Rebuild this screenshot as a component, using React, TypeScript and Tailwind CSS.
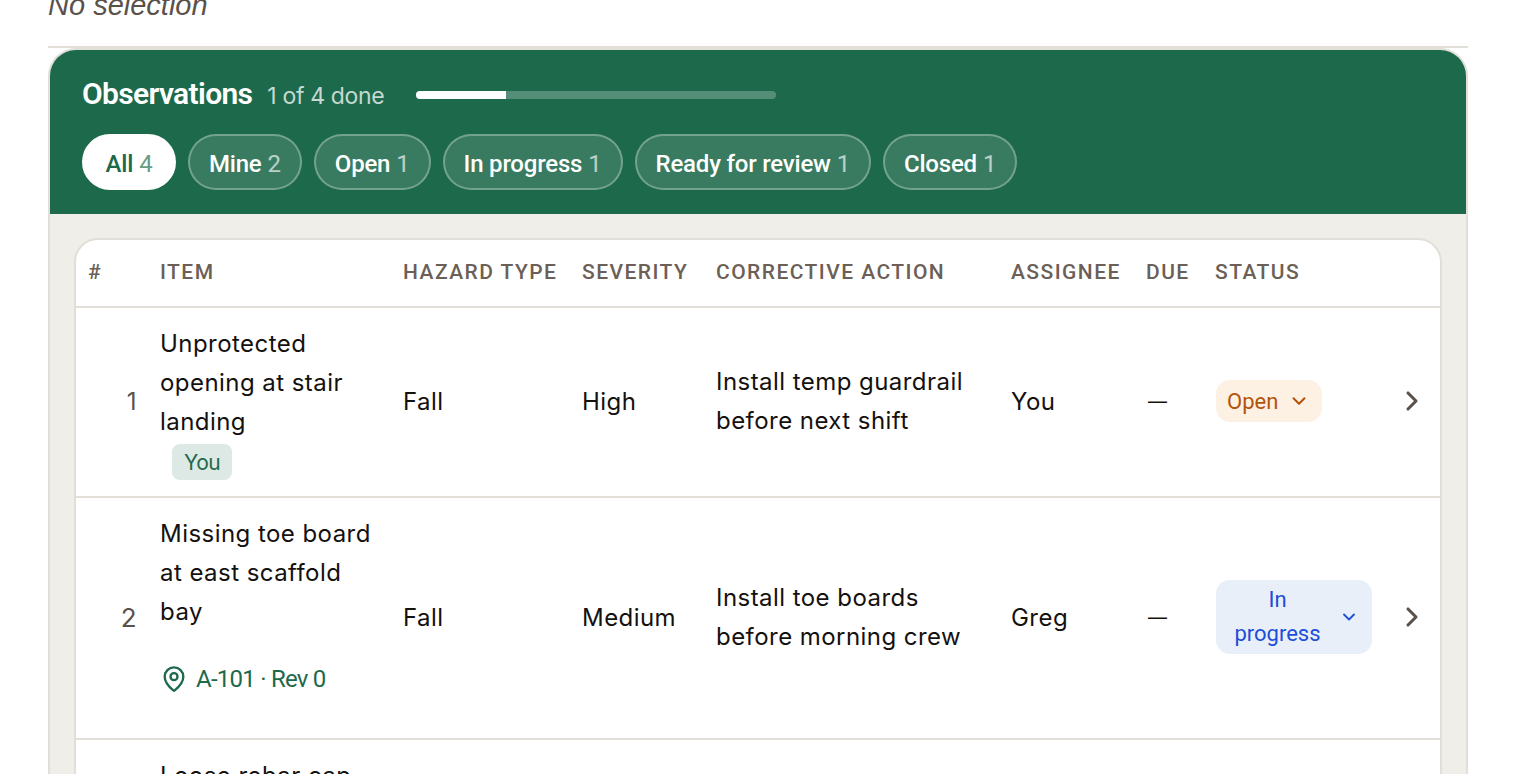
import { ChevronDown, ChevronRight, MapPin } from "lucide-react";

const body = "font-['Inter','Noto_Sans',sans-serif]";
const cond = "font-['Roboto','Liberation_Sans',sans-serif]";

const chips = [
  { label: "All", n: 4, active: true },
  { label: "Mine", n: 2 },
  { label: "Open", n: 1 },
  { label: "In progress", n: 1 },
  { label: "Ready for review", n: 1 },
  { label: "Closed", n: 1 },
];

const heads = ["#", "ITEM", "HAZARD TYPE", "SEVERITY", "CORRECTIVE ACTION", "ASSIGNEE", "DUE", "STATUS", ""];

function Chip({ label, n, active }: { label: string; n: number; active?: boolean }) {
  return (
    <button
      className={`h-[56px] min-w-[94px] justify-center px-[19px] pt-[3px] rounded-full border-2 text-[24px] font-medium tracking-[-0.2px] whitespace-nowrap flex items-center gap-[6px] ${cond} ${
        active ? "bg-white border-white text-[#1d694b]" : "bg-white/[0.12] border-white/30 text-white"
      }`}
    >
      <span>{label}</span>
      <span className={`font-normal ${active ? "text-[#6a9c87]" : "text-white/65"}`}>{n}</span>
    </button>
  );
}

export default function App() {
  return (
    <div className={`h-[774px] overflow-hidden bg-white px-[48px] ${body}`}>
      <p className="-mt-[12px] h-[58px] italic text-[29px] leading-[34px] text-[#5a514b] font-['Liberation_Sans',sans-serif]">No selection</p>
      <div className="border-t-2 border-[#e2dfd8]">
        <section className="rounded-t-[28px] border-2 border-b-0 border-[#e2dfd8] bg-[#f0eee9] overflow-hidden">
          <header className="bg-[#1d694b] h-[164px] pt-[23px] px-[32px]">
            <div className="flex items-center h-[40px]">
              <h2 className={`text-[30px] font-semibold tracking-[-0.65px] text-white ${cond}`}>Observations</h2>
              <span className="ml-[15px] mt-[6px] text-[23px] tracking-[-0.35px] text-white/75">1 of 4 done</span>
              <div className="ml-[32px] mt-[4px] w-[360px] h-[8px] rounded-full bg-white/25 overflow-hidden">
                <div className="w-[90px] h-full bg-white" />
              </div>
            </div>
            <div className="flex gap-[12px] mt-[21px]">
              {chips.map((c) => (
                <Chip key={c.label} {...c} />
              ))}
            </div>
          </header>
          <div className="pt-[24px] px-[24px]">
            <div className="bg-white border-2 border-[#e2dfd8] rounded-t-[24px] overflow-hidden h-[560px]">
              <table className="table-fixed w-full border-collapse text-[24px] text-[#14110f] tracking-[0.45px]">
                <colgroup>
                  <col className="w-[72px]" />
                  <col className="w-[243px]" />
                  <col className="w-[179px]" />
                  <col className="w-[134px]" />
                  <col className="w-[295px]" />
                  <col className="w-[135px]" />
                  <col className="w-[69px]" />
                  <col className="w-[181px]" />
                  <col />
                </colgroup>
                <thead>
                  <tr className="h-[67px] border-b-2 border-[#e2dfd8]">
                    {heads.map((h) => (
                      <th
                        key={h}
                        className={`text-left align-middle pl-[12px] pb-[1px] text-[21px] font-medium tracking-[1.45px] text-[#6b5f57] whitespace-nowrap ${cond}`}
                      >
                        {h}
                      </th>
                    ))}
                  </tr>
                </thead>
                <tbody className="leading-[39px]">
                  <tr className="h-[190px] border-b-2 border-[#e2dfd8]">
                    <td className="text-right pr-[11px] pb-[2px] text-[#5a514b]">1</td>
                    <td className="pl-[12px] whitespace-nowrap">
                      Unprotected
                      <br />
                      opening at stair
                      <br />
                      landing
                      <br />
                      <span className="ml-[12px] inline-flex items-center h-[36px] px-[12px] rounded-[8px] bg-[#dde9e4] text-[#1d694b] text-[21px] tracking-[-0.5px] align-middle">
                        You
                      </span>
                    </td>
                    <td className="pl-[12px] pb-[2px]">Fall</td>
                    <td className="pl-[12px] pb-[2px]">High</td>
                    <td className="pl-[12px] pb-[2px] whitespace-nowrap">
                      Install temp guardrail
                      <br />
                      before next shift
                    </td>
                    <td className="pl-[12px] pb-[2px]">You</td>
                    <td className="pl-[14px] pb-[2px] text-[19px]">—</td>
                    <td className="pl-[13px] pb-[2px]">
                      <div className={`w-[106px] h-[42px] rounded-[14px] bg-[#fdf1e3] text-[#b45309] flex items-center pl-[11px] gap-[10px] text-[22px] tracking-normal ${cond}`}>
                        Open
                        <ChevronDown size={22} strokeWidth={2.2} />
                      </div>
                    </td>
                    <td className="pl-[12px] pb-[2px] text-[#5a514b]">
                      <ChevronRight size={32} strokeWidth={2.3} />
                    </td>
                  </tr>
                  <tr className="h-[242px] border-b-2 border-[#e2dfd8]">
                    <td className="text-right pr-[11px] pb-[2px] text-[#5a514b] text-[26px]">2</td>
                    <td className="pl-[12px] whitespace-nowrap pt-[16px] pb-[41px]">
                      Missing toe board
                      <br />
                      at east scaffold
                      <br />
                      bay
                      <div className={`mt-[30px] h-[36px] flex items-center gap-[8px] text-[#1d694b] text-[24px] tracking-[-0.75px] ${cond}`}>
                        <MapPin size={28} strokeWidth={2} />
                        A-101 · Rev 0
                      </div>
                    </td>
                    <td className="pl-[12px] pb-[2px]">Fall</td>
                    <td className="pl-[12px] pb-[2px]">Medium</td>
                    <td className="pl-[12px] pb-[2px] whitespace-nowrap">
                      Install toe boards
                      <br />
                      before morning crew
                    </td>
                    <td className="pl-[12px] pb-[2px]">Greg</td>
                    <td className="pl-[14px] pb-[2px] text-[19px]">—</td>
                    <td className="pl-[13px] pb-[2px]">
                      <div className={`w-[156px] h-[74px] rounded-[14px] bg-[#e8eff9] text-[#1d4ed8] flex items-center pr-[13px] text-[22px] leading-[34px] tracking-normal ${cond}`}>
                        <span className="flex-1 text-center">
                          In
                          <br />
                          progress
                        </span>
                        <ChevronDown size={20} strokeWidth={2.2} />
                      </div>
                    </td>
                    <td className="pl-[12px] pb-[2px] text-[#5a514b]">
                      <ChevronRight size={32} strokeWidth={2.3} />
                    </td>
                  </tr>
                  <tr>
                    <td />
                    <td className="pl-[12px] pt-[16px] whitespace-nowrap">Loose rebar cap</td>
                  </tr>
                </tbody>
              </table>
            </div>
          </div>
        </section>
      </div>
    </div>
  );
}
